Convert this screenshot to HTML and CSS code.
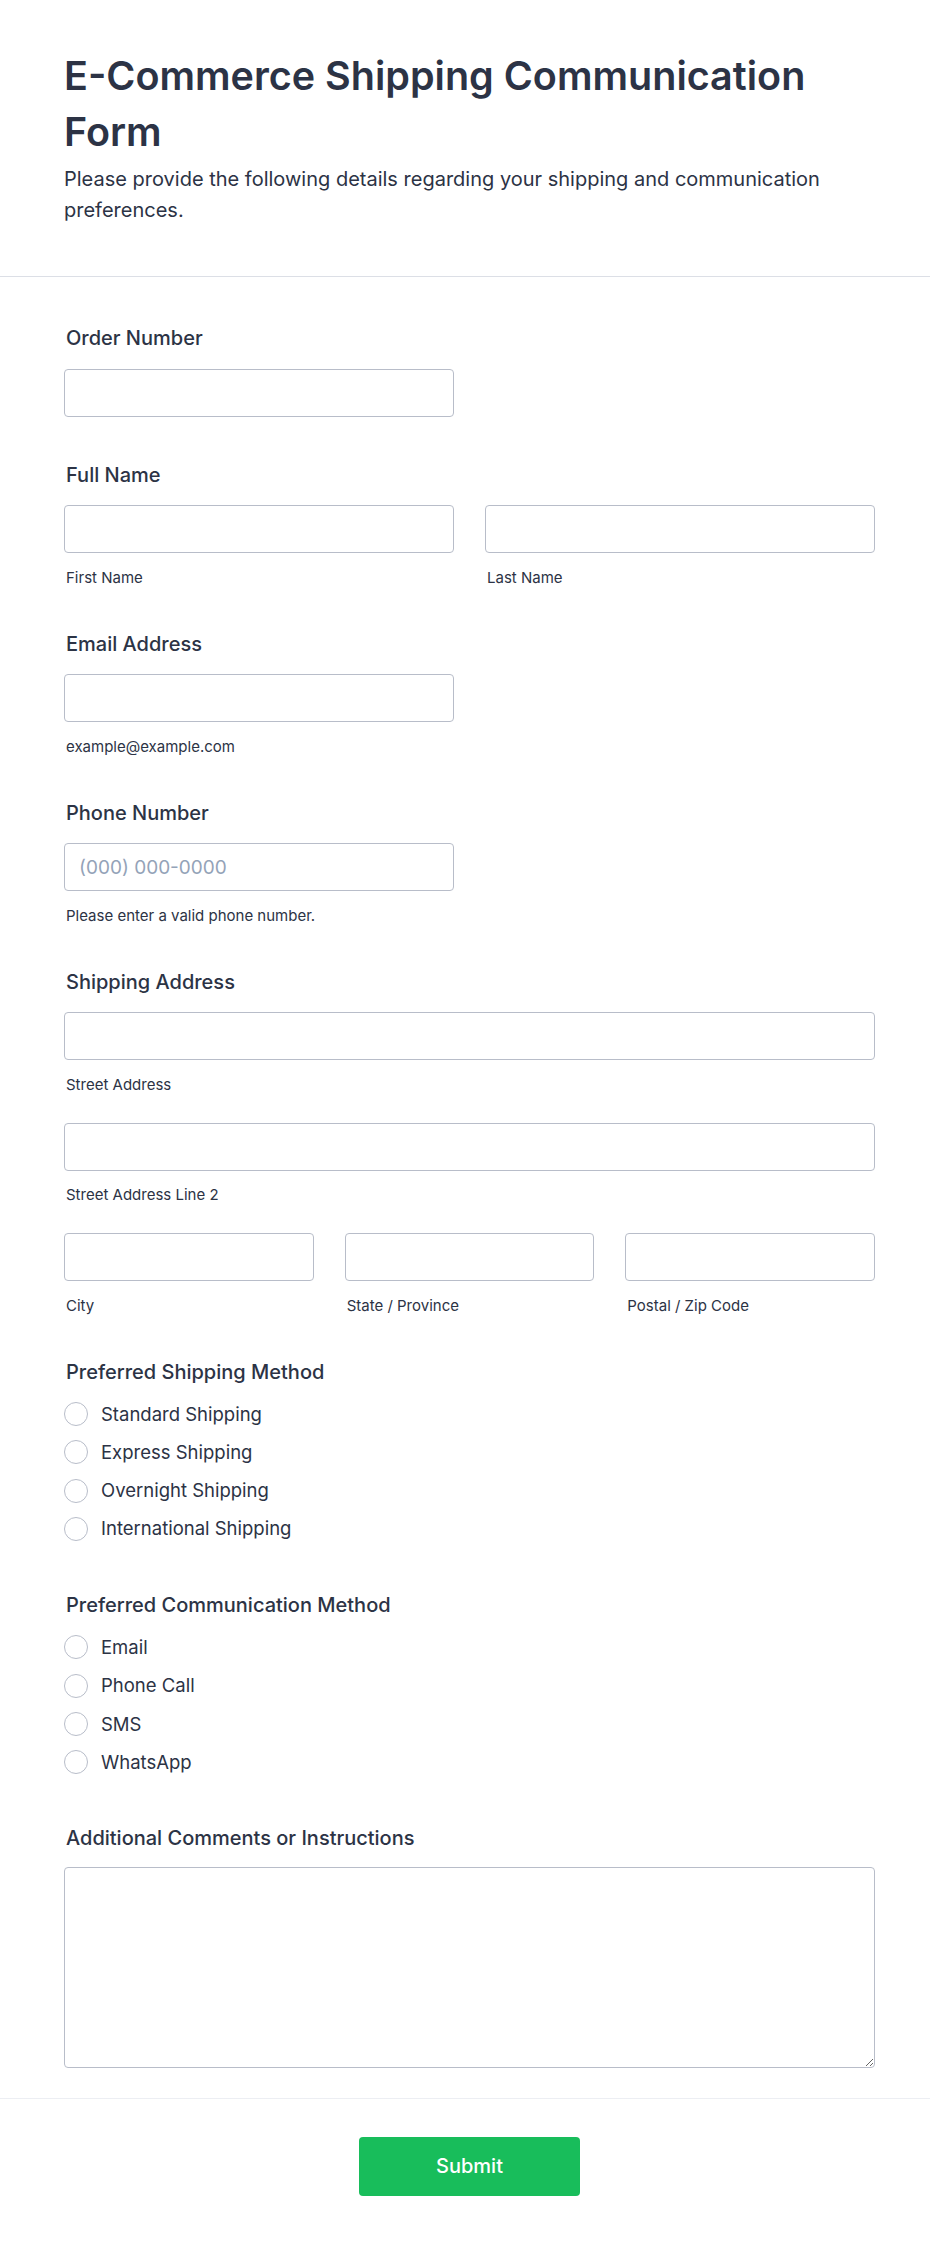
FILE: index.html
```html
<!DOCTYPE html>
<html lang="en">
<head>
<meta charset="utf-8">
<title>E-Commerce Shipping Communication Form</title>
<link rel="stylesheet" href="styles.css">
</head>
<body>
<div class="page">
  <header class="header">
    <h1 class="title">E-Commerce Shipping Communication Form</h1>
    <p class="subtitle">Please provide the following details regarding your shipping and communication preferences.</p>
  </header>

  <form class="form">
    <div class="field field-plain">
      <label class="label">Order Number</label>
      <div class="row-half"><input class="input" type="text"></div>
    </div>

    <div class="field">
      <label class="label">Full Name</label>
      <div class="grid-2">
        <div><input class="input" type="text"><div class="sublabel">First Name</div></div>
        <div><input class="input" type="text"><div class="sublabel">Last Name</div></div>
      </div>
    </div>

    <div class="field">
      <label class="label">Email Address</label>
      <div class="row-half"><input class="input" type="email"></div>
      <div class="sublabel">example@example.com</div>
    </div>

    <div class="field">
      <label class="label">Phone Number</label>
      <div class="row-half"><input class="input" type="tel" placeholder="(000) 000-0000"></div>
      <div class="sublabel">Please enter a valid phone number.</div>
    </div>

    <div class="field">
      <label class="label">Shipping Address</label>
      <div class="addr-row">
        <input class="input" type="text">
        <div class="sublabel">Street Address</div>
      </div>
      <div class="addr-row">
        <input class="input" type="text">
        <div class="sublabel">Street Address Line 2</div>
      </div>
      <div class="grid-3">
        <div><input class="input" type="text"><div class="sublabel">City</div></div>
        <div><input class="input" type="text"><div class="sublabel">State / Province</div></div>
        <div><input class="input" type="text"><div class="sublabel">Postal / Zip Code</div></div>
      </div>
    </div>

    <div class="field field-radio">
      <label class="label">Preferred Shipping Method</label>
      <div class="options">
        <label class="option"><span class="radio"></span><span>Standard Shipping</span></label>
        <label class="option"><span class="radio"></span><span>Express Shipping</span></label>
        <label class="option"><span class="radio"></span><span>Overnight Shipping</span></label>
        <label class="option"><span class="radio"></span><span>International Shipping</span></label>
      </div>
    </div>

    <div class="field field-radio">
      <label class="label">Preferred Communication Method</label>
      <div class="options">
        <label class="option"><span class="radio"></span><span>Email</span></label>
        <label class="option"><span class="radio"></span><span>Phone Call</span></label>
        <label class="option"><span class="radio"></span><span>SMS</span></label>
        <label class="option"><span class="radio"></span><span>WhatsApp</span></label>
      </div>
    </div>

    <div class="field field-last">
      <label class="label label-ta">Additional Comments or Instructions</label>
      <textarea class="textarea"></textarea>
    </div>
  </form>

  <div class="footer">
    <button class="submit" type="button">Submit</button>
  </div>
</div>
</body>
</html>
```
FILE: styles.css
```css
* { box-sizing: border-box; }

html, body {
  margin: 0;
  padding: 0;
  background: #ffffff;
}

body {
  font-family: Inter, "Noto Sans", "Liberation Sans", sans-serif;
  color: #2c3345;
}

.header {
  padding: 48px 55px 50px 64px;
  border-bottom: 1px solid #dcdfe6;
}

.title {
  margin: 0;
  font-size: 39.5px;
  line-height: 56px;
  font-weight: 600;
  color: #2c3345;
}

.subtitle {
  margin: 4px 0 0;
  font-size: 20px;
  line-height: 31px;
  font-weight: 400;
  color: #2c3345;
}

.form {
  padding: 48px 55px 30px 64px;
  border-bottom: 1px solid #eceef3;
}

.field {
  margin-bottom: 43px;
}

.field-plain {
  margin-bottom: 45px;
}

.field-radio {
  margin-bottom: 49.5px;
}

.field-last {
  margin-bottom: 0;
}

.label {
  display: block;
  font-size: 20px;
  line-height: 27px;
  font-weight: 500;
  margin: 0 0 16.5px 2px;
}

.label-ta {
  margin-bottom: 14.5px;
}

.row-half {
  width: 390px;
}

.input {
  display: block;
  width: 100%;
  height: 48px;
  margin: 0;
  padding: 0 14px;
  border: 1px solid #b8bdc9;
  border-radius: 4px;
  background: #fff;
  font-family: inherit;
  font-size: 19px;
  color: #2c3345;
  outline: none;
}

.input::placeholder {
  color: #94a3b8;
}

.sublabel {
  margin: 14.5px 0 0 2px;
  font-size: 15px;
  line-height: 20px;
  color: #2c3345;
}

.grid-2 {
  display: grid;
  grid-template-columns: 1fr 1fr;
  column-gap: 31px;
}

.grid-3 {
  display: grid;
  grid-template-columns: 1fr 1fr 1fr;
  column-gap: 31px;
}

.addr-row {
  margin-bottom: 28px;
}

.options {
  display: flex;
  flex-direction: column;
  gap: 11.33px;
  margin-top: -1.5px;
}

.option {
  display: flex;
  align-items: center;
  gap: 13px;
  font-size: 18.5px;
  line-height: 27px;
  color: #2c3345;
}

.radio {
  flex: none;
  width: 24px;
  height: 24px;
  border: 1px solid #b8bdc9;
  border-radius: 50%;
  background: #fff;
}

.textarea {
  display: block;
  width: 100%;
  height: 201px;
  margin: 0;
  padding: 10px 14px;
  border: 1px solid #b8bdc9;
  border-radius: 4px;
  font-family: inherit;
  font-size: 18px;
  color: #2c3345;
  resize: vertical;
  outline: none;
}

.footer {
  padding: 38px 55px 50px 64px;
  display: flex;
  justify-content: center;
}

.submit {
  width: 221px;
  height: 59px;
  border: none;
  border-radius: 4px;
  background: #18bd5b;
  color: #ffffff;
  font-family: inherit;
  font-size: 20px;
  font-weight: 500;
  cursor: pointer;
}
```
